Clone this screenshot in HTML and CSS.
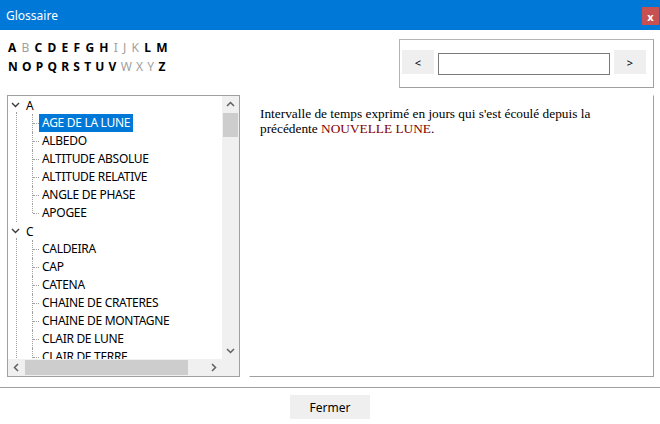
FILE: index.html
```html
<!DOCTYPE html>
<html lang="fr">
<head>
<meta charset="utf-8">
<title>Glossaire</title>
<link rel="stylesheet" href="styles.css">
</head>
<body>
<div class="window">
  <div class="titlebar">
    <span class="title">Glossaire</span>
    <span class="close">x</span>
  </div>
  <div class="top">
    <div class="letters">
      <div class="letter-row row-1">
        <span class="on">A</span> <span class="off">B</span> <span class="on">C</span> <span class="on">D</span> <span class="on">E</span> <span class="on">F</span> <span class="on">G</span> <span class="on">H</span> <span class="off">I</span> <span class="off">J</span> <span class="off">K</span> <span class="on">L</span> <span class="on">M</span>
      </div>
      <div class="letter-row row-2">
        <span class="on">N</span> <span class="on">O</span> <span class="on">P</span> <span class="on">Q</span> <span class="on">R</span> <span class="on">S</span> <span class="on">T</span> <span class="on">U</span> <span class="on">V</span> <span class="off">W</span> <span class="off">X</span> <span class="off">Y</span> <span class="on">Z</span>
      </div>
    </div>
    <div class="navbox">
      <button class="navbtn prev">&lt;</button>
      <div class="navinput"></div>
      <button class="navbtn next">&gt;</button>
    </div>
  </div>
  <div class="main">
    <div class="tree">
      <div class="tree-content">
        <div class="node">
          <div class="row parent">
            <svg class="chev" width="9" height="6" viewBox="0 0 9 6"><polyline points="1,1 4.5,4.5 8,1" fill="none" stroke="#3c3c3c" stroke-width="1.4"/></svg>
            <span class="plabel">A</span>
          </div>
          <div class="children">
            <div class="row child"><span class="clabel sel">AGE DE LA LUNE</span></div>
            <div class="row child"><span class="clabel">ALBEDO</span></div>
            <div class="row child"><span class="clabel">ALTITUDE ABSOLUE</span></div>
            <div class="row child"><span class="clabel">ALTITUDE RELATIVE</span></div>
            <div class="row child"><span class="clabel">ANGLE DE PHASE</span></div>
            <div class="row child last"><span class="clabel">APOGEE</span></div>
          </div>
        </div>
        <div class="node">
          <div class="row parent">
            <svg class="chev" width="9" height="6" viewBox="0 0 9 6"><polyline points="1,1 4.5,4.5 8,1" fill="none" stroke="#3c3c3c" stroke-width="1.4"/></svg>
            <span class="plabel">C</span>
          </div>
          <div class="children">
            <div class="row child"><span class="clabel">CALDEIRA</span></div>
            <div class="row child"><span class="clabel">CAP</span></div>
            <div class="row child"><span class="clabel">CATENA</span></div>
            <div class="row child"><span class="clabel">CHAINE DE CRATERES</span></div>
            <div class="row child"><span class="clabel">CHAINE DE MONTAGNE</span></div>
            <div class="row child"><span class="clabel">CLAIR DE LUNE</span></div>
            <div class="row child"><span class="clabel">CLAIR DE TERRE</span></div>
            <div class="row child"><span class="clabel">CLAIR OBSCUR</span></div>
          </div>
        </div>
      </div>
      <div class="vscroll">
        <svg class="arrow" width="17" height="17" viewBox="0 0 17 17"><polyline points="5,10 8.5,6.5 12,10" fill="none" stroke="#606060" stroke-width="1.5"/></svg>
        <div class="vthumb"></div>
        <div class="vspace"></div>
        <svg class="arrow" width="17" height="17" viewBox="0 0 17 17"><polyline points="5,7 8.5,10.5 12,7" fill="none" stroke="#606060" stroke-width="1.5"/></svg>
      </div>
      <div class="hscroll">
        <svg class="arrow" width="17" height="17" viewBox="0 0 17 17"><polyline points="10,5 6.5,8.5 10,12" fill="none" stroke="#606060" stroke-width="1.5"/></svg>
        <div class="hthumb"></div>
        <div class="hspace"></div>
        <svg class="arrow" width="17" height="17" viewBox="0 0 17 17"><polyline points="7,5 10.5,8.5 7,12" fill="none" stroke="#606060" stroke-width="1.5"/></svg>
      </div>
      <div class="corner"></div>
    </div>
    <div class="content">
      <p class="desc">Intervalle de temps exprimé en jours qui s'est écoulé depuis la précédente <span class="link">NOUVELLE LUNE</span>.</p>
    </div>
  </div>
  <div class="footer">
    <button class="close-btn">Fermer</button>
  </div>
</div>
</body>
</html>
```
FILE: styles.css
```css
* { box-sizing: border-box; }
html, body { margin: 0; padding: 0; }
body {
  width: 660px;
  height: 424px;
  background: #ffffff;
  font-family: "Noto Sans", "Open Sans", "DejaVu Sans", sans-serif;
  font-size: 12px;
  color: #000;
  overflow: hidden;
}
.window { width: 660px; height: 424px; display: flex; flex-direction: column; }

.titlebar {
  height: 30px;
  background: #0078d7;
  display: flex;
  align-items: center;
  padding-left: 6px;
  flex: none;
}
.title { color: #fff; font-size: 12px; }
.close {
  margin-left: auto;
  width: 17px;
  height: 18px;
  margin-right: 1px;
  margin-top: 2px;
  background: #c75050;
  color: #fff;
  font-weight: bold;
  font-size: 11px;
  display: flex;
  align-items: center;
  justify-content: center;
  line-height: 1;
}

.top {
  display: flex;
  align-items: flex-start;
  height: 65px;
  flex: none;
}
.letters {
  padding-left: 8px;
  padding-top: 8px;
  font-weight: bold;
  font-size: 12px;
  line-height: 19px;
}
.letter-row { white-space: nowrap; }
.row-1 { word-spacing: 2.1px; }
.row-2 { word-spacing: 1.1px; }
.on { color: #000; }
.off { color: #a0a0a0; font-weight: normal; }

.navbox {
  margin-left: auto;
  margin-right: 6px;
  margin-top: 9px;
  width: 255px;
  height: 49px;
  border: 1px solid #a0a0a0;
  border-top-color: #b4b4b4;
  border-left-color: #b4b4b4;
  display: flex;
  align-items: flex-start;
  padding: 10px 0 0 2px;
}
.navbtn {
  width: 32px;
  height: 24px;
  border: none;
  background: #efefef;
  font-family: inherit;
  font-size: 11px;
  color: #000;
  padding: 0;
}
.navinput {
  width: 172px;
  height: 22px;
  margin: 3px 4px 0 4px;
  border: 1px solid #7a7a7a;
  background: #fff;
}

.main {
  display: flex;
  height: 282px;
  flex: none;
}
.tree {
  margin-left: 7px;
  width: 233px;
  height: 282px;
  border: 1px solid #a0a0a0;
  display: grid;
  grid-template-columns: 1fr 17px;
  grid-template-rows: 1fr 17px;
  overflow: hidden;
}
.tree-content {
  overflow: hidden;
  padding-left: 1px;
  padding-top: 0;
}
.node { position: relative; }
.node::before {
  content: "";
  position: absolute;
  left: 7px;
  top: 16px;
  bottom: 0;
  border-left: 1px dotted #a0a0a0;
}
.row {
  height: 18px;
  display: flex;
  align-items: center;
  white-space: nowrap;
}
.parent .chev { margin-left: 2px; margin-right: 6px; }
.plabel { margin-left: 0; }
.children { padding-left: 30px; }
.child { position: relative; }
.child::before {
  content: "";
  position: absolute;
  left: -7px;
  top: 0;
  bottom: 0;
  border-left: 1px dotted #a0a0a0;
}
.child.last::before { bottom: 9px; }
.child::after {
  content: "";
  position: absolute;
  left: -6px;
  top: 9px;
  width: 6px;
  border-top: 1px dotted #a0a0a0;
}
.clabel {
  padding: 0 3px 0 3px;
  height: 18px;
  line-height: 18px;
  letter-spacing: -0.3px;
}
.clabel.sel { background: #0078d7; color: #fff; }

.vscroll {
  background: #f0f0f0;
  display: flex;
  flex-direction: column;
  align-items: center;
}
.vthumb { width: 15px; height: 24px; background: #cdcdcd; flex: none; }
.vspace { flex: 1; }
.hscroll {
  background: #f0f0f0;
  display: flex;
  align-items: center;
}
.hthumb { width: 163px; height: 15px; background: #cdcdcd; flex: none; margin-left: 0; }
.hspace { flex: 1; }
.arrow { flex: none; display: block; }
.corner { background: #f0f0f0; }

.content {
  margin-left: 9px;
  width: 405px;
  height: 282px;
  border: 1px solid #fff;
  border-right-color: #a0a0a0;
  border-bottom-color: #a0a0a0;
  padding: 10px 10px 0 10px;
}
.desc {
  margin: 0;
  font-family: "Liberation Serif", "Times New Roman", serif;
  font-size: 13.33px;
  line-height: 15px;
}
.link { color: #800000; }

.footer {
  margin-top: 10px;
  border-top: 1px solid #a0a0a0;
  display: flex;
  justify-content: center;
  padding-top: 7px;
  flex: 1;
}
.close-btn {
  width: 80px;
  height: 24px;
  border: none;
  background: #efefef;
  font-family: inherit;
  font-size: 12px;
  color: #000;
  padding: 0;
}
```
